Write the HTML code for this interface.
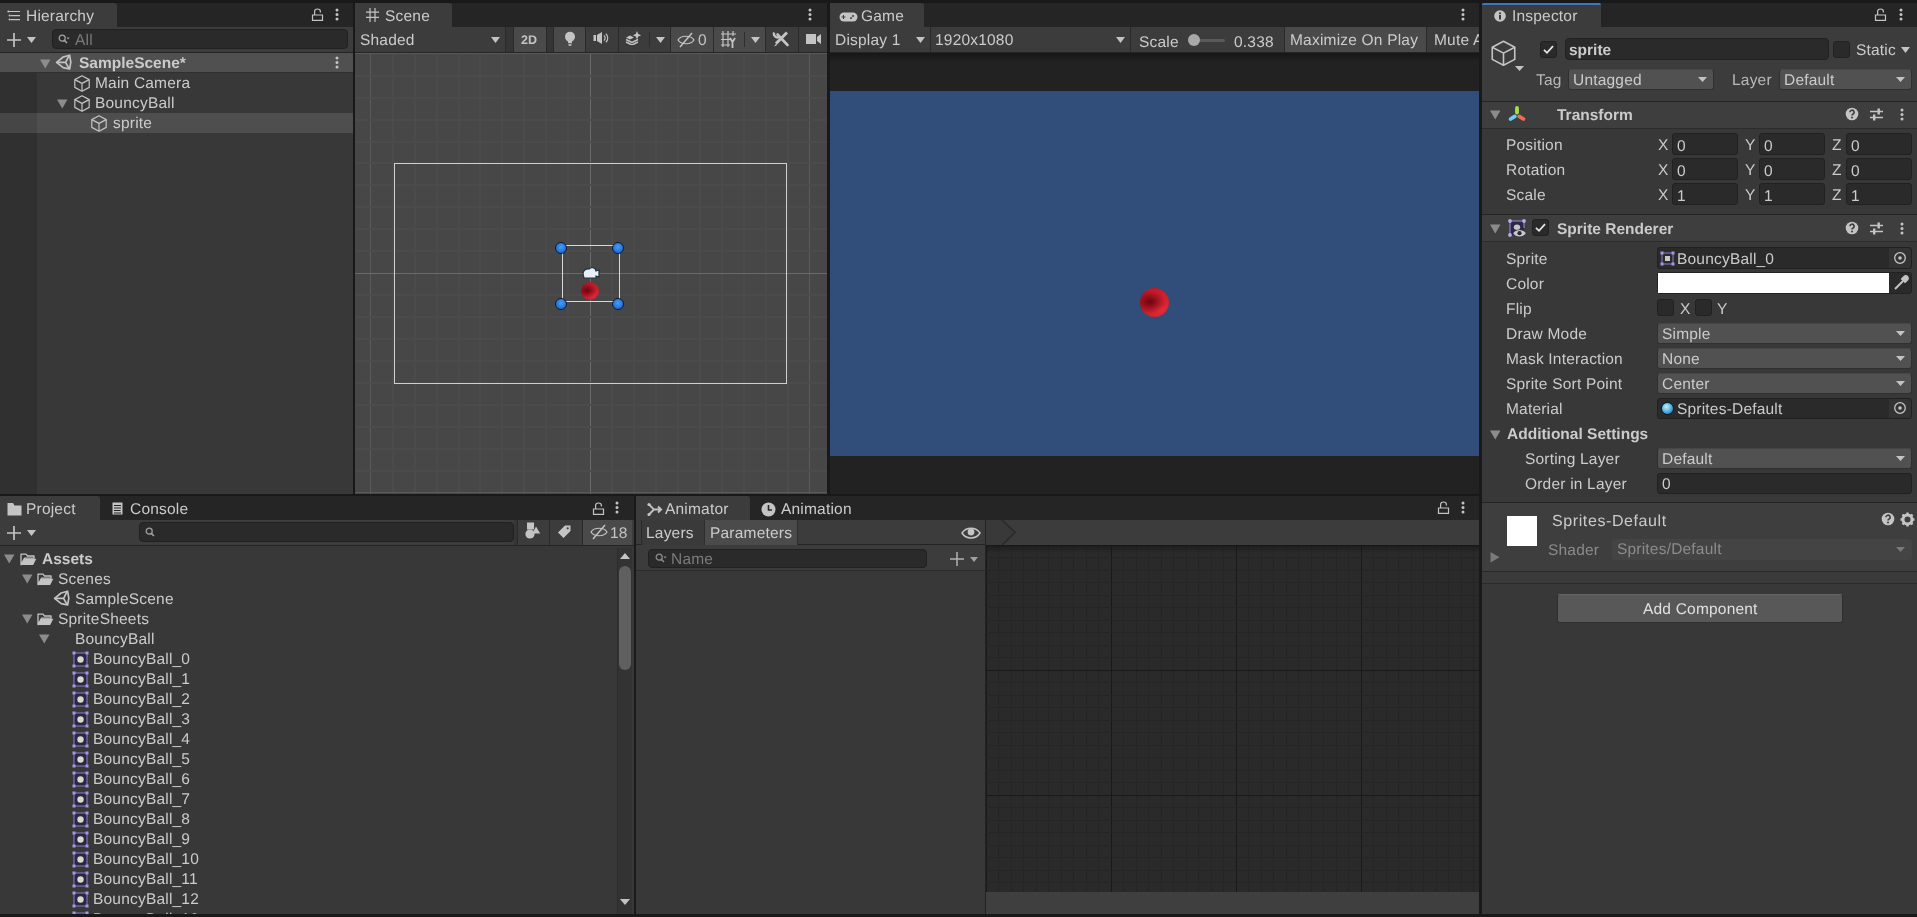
<!DOCTYPE html>
<html><head><meta charset="utf-8">
<style>
*{box-sizing:border-box;margin:0;padding:0}
html,body{width:1917px;height:917px;overflow:hidden;background:#191919}
.t{will-change:transform}
body{position:relative;font-family:"Liberation Sans",sans-serif;font-size:15.5px;color:#cbcbcb;letter-spacing:0.2px;text-rendering:geometricPrecision;-webkit-font-smoothing:antialiased}
.a{position:absolute;display:block}
.t{position:absolute;white-space:nowrap;line-height:20px;height:20px}
</style></head><body>

<div class="a" style="left:0px;top:3px;width:353px;height:491px;background:#383838;"></div>
<div class="a" style="left:0px;top:3px;width:353px;height:24px;background:#252525;"></div>
<div class="a" style="left:0px;top:3px;width:117px;height:24px;background:#3c3c3c;border-radius:0 3px 0 0"></div>
<svg class="a" style="left:7px;top:10px;" width="14" height="12" viewBox="0 0 14 12"><g stroke="#c4c4c4" stroke-width="1.1"><path d="M1.5 1.5H13M3.5 5.6H13M3.5 9.6H13"/></g><g fill="#c4c4c4"><circle cx="1.3" cy="1.5" r="1"/><circle cx="2.6" cy="5.6" r="1"/><circle cx="2.6" cy="9.6" r="1"/></g></svg>
<div class="t" style="left:26px;top:7px;">Hierarchy</div>
<svg class="a" style="left:311px;top:8px;" width="13" height="13" viewBox="0 0 13 13"><path d="M1.5 12.4h10v-5.4h-10z" fill="none" stroke="#c4c4c4" stroke-width="1.2"/><path d="M3.6 7V3.6a2.9 2.6 0 0 1 5.8 0V4.4" fill="none" stroke="#c4c4c4" stroke-width="1.2"/></svg>
<svg class="a" style="left:335px;top:8px;" width="4" height="13" viewBox="0 0 4 13"><circle cx="2" cy="2" r="1.5" fill="#c4c4c4"/><circle cx="2" cy="6.5" r="1.5" fill="#c4c4c4"/><circle cx="2" cy="11" r="1.5" fill="#c4c4c4"/></svg>
<div class="a" style="left:0px;top:27px;width:353px;height:26px;background:#3c3c3c;border-bottom:1px solid #242424"></div>
<svg class="a" style="left:6px;top:32px;" width="16" height="16" viewBox="0 0 16 16"><path d="M8 1V15M1 8H15" stroke="#c4c4c4" stroke-width="1.7"/></svg>
<svg class="a" style="left:27px;top:37px;" width="9" height="6" viewBox="0 0 9 6"><path d="M0 0H9L4.5 6z" fill="#c4c4c4"/></svg>
<div class="a" style="left:52px;top:29px;width:296px;height:20px;background:#2a2a2a;border:1px solid #212121;border-radius:4px"></div>
<svg class="a" style="left:58px;top:34px;" width="12" height="11" viewBox="0 0 12 11"><circle cx="4.2" cy="4.2" r="3" fill="none" stroke="#a0a0a0" stroke-width="1.3"/><path d="M6.4 6.4L9 9" stroke="#a0a0a0" stroke-width="1.6"/><path d="M8.5 3.6h3.2l-1.6 1.8z" fill="#a0a0a0"/></svg>
<div class="t" style="left:75px;top:31px;color:#7a7a7a;">All</div>
<div class="a" style="left:0px;top:53px;width:37px;height:441px;background:#303030;"></div>
<div class="a" style="left:0px;top:53px;width:353px;height:19px;background:#505050;"></div>
<div class="a" style="left:0px;top:72px;width:353px;height:1px;background:#303030;"></div>
<div class="a" style="left:0px;top:113px;width:37px;height:20px;background:#464646;"></div>
<div class="a" style="left:37px;top:113px;width:316px;height:20px;background:#4e4e4e;"></div>
<svg class="a" style="left:40px;top:59px;" width="11" height="10" viewBox="0 0 11 10"><path d="M0 0.5H10.5L5.25 9.5z" fill="#8c8c8c"/></svg>
<svg class="a" style="left:54px;top:53px;" width="19" height="18" viewBox="0 0 19 18"><g fill="none" stroke="#c4c4c4" stroke-width="1.7" stroke-linejoin="round"><path d="M2.6 9.3L9.2 4L15.6 2.2L16.8 9.2L15.6 16L9.2 14.6Z"/><path d="M2.6 9.3H11.6L14.8 3.2M11.6 9.3L14.8 15.2"/></g></svg>
<div class="t" style="left:79px;top:54px;font-weight:bold;letter-spacing:0;">SampleScene*</div>
<svg class="a" style="left:335px;top:56px;" width="4" height="13" viewBox="0 0 4 13"><circle cx="2" cy="2" r="1.5" fill="#c4c4c4"/><circle cx="2" cy="6.5" r="1.5" fill="#c4c4c4"/><circle cx="2" cy="11" r="1.5" fill="#c4c4c4"/></svg>
<svg class="a" style="left:74px;top:75px;" width="16" height="17" viewBox="0 0 16 17"><g fill="none" stroke="#c4c4c4" stroke-width="1.2" stroke-linejoin="round"><path d="M8.00 0.80L15.20 4.60L15.20 12.40L8.00 16.20L0.80 12.40L0.80 4.60Z"/><path d="M0.80 4.60L8.00 8.40L15.20 4.60M8.00 8.40L8.00 16.20"/></g></svg>
<div class="t" style="left:95px;top:74px;">Main Camera</div>
<svg class="a" style="left:57px;top:99px;" width="11" height="10" viewBox="0 0 11 10"><path d="M0 0.5H10.5L5.25 9.5z" fill="#8c8c8c"/></svg>
<svg class="a" style="left:74px;top:95px;" width="16" height="17" viewBox="0 0 16 17"><g fill="none" stroke="#c4c4c4" stroke-width="1.2" stroke-linejoin="round"><path d="M8.00 0.80L15.20 4.60L15.20 12.40L8.00 16.20L0.80 12.40L0.80 4.60Z"/><path d="M0.80 4.60L8.00 8.40L15.20 4.60M8.00 8.40L8.00 16.20"/></g></svg>
<div class="t" style="left:95px;top:94px;">BouncyBall</div>
<svg class="a" style="left:91px;top:115px;" width="16" height="17" viewBox="0 0 16 17"><g fill="none" stroke="#c4c4c4" stroke-width="1.2" stroke-linejoin="round"><path d="M8.00 0.80L15.20 4.60L15.20 12.40L8.00 16.20L0.80 12.40L0.80 4.60Z"/><path d="M0.80 4.60L8.00 8.40L15.20 4.60M8.00 8.40L8.00 16.20"/></g></svg>
<div class="t" style="left:113px;top:114px;">sprite</div>
<div class="a" style="left:353px;top:3px;width:2px;height:491px;background:#191919;"></div>
<div class="a" style="left:355px;top:52px;width:472px;height:442px;background:#474747;"></div>
<div class="a" style="left:355px;top:52px;width:472px;height:442px;overflow:hidden"><div class="a" style="left:15.20px;top:0;width:1px;height:442px;background:#5a5a5a"></div><div class="a" style="left:36.65px;top:0;width:2px;height:442px;background:#4b4b4b"></div><div class="a" style="left:58.60px;top:0;width:2px;height:442px;background:#4b4b4b"></div><div class="a" style="left:80.55px;top:0;width:2px;height:442px;background:#4b4b4b"></div><div class="a" style="left:102.50px;top:0;width:2px;height:442px;background:#4b4b4b"></div><div class="a" style="left:124.45px;top:0;width:2px;height:442px;background:#4b4b4b"></div><div class="a" style="left:146.40px;top:0;width:2px;height:442px;background:#4b4b4b"></div><div class="a" style="left:168.35px;top:0;width:2px;height:442px;background:#4b4b4b"></div><div class="a" style="left:190.30px;top:0;width:2px;height:442px;background:#4b4b4b"></div><div class="a" style="left:212.25px;top:0;width:2px;height:442px;background:#4b4b4b"></div><div class="a" style="left:234.70px;top:0;width:1px;height:442px;background:#6a6a6a"></div><div class="a" style="left:256.15px;top:0;width:2px;height:442px;background:#4b4b4b"></div><div class="a" style="left:278.10px;top:0;width:2px;height:442px;background:#4b4b4b"></div><div class="a" style="left:300.05px;top:0;width:2px;height:442px;background:#4b4b4b"></div><div class="a" style="left:322.00px;top:0;width:2px;height:442px;background:#4b4b4b"></div><div class="a" style="left:343.95px;top:0;width:2px;height:442px;background:#4b4b4b"></div><div class="a" style="left:365.90px;top:0;width:2px;height:442px;background:#4b4b4b"></div><div class="a" style="left:387.85px;top:0;width:2px;height:442px;background:#4b4b4b"></div><div class="a" style="left:409.80px;top:0;width:2px;height:442px;background:#4b4b4b"></div><div class="a" style="left:431.75px;top:0;width:2px;height:442px;background:#4b4b4b"></div><div class="a" style="left:454.20px;top:0;width:1px;height:442px;background:#5a5a5a"></div><div class="a" style="left:0;top:1.20px;width:472px;height:1px;background:#5a5a5a"></div><div class="a" style="left:0;top:22.65px;width:472px;height:2px;background:#4b4b4b"></div><div class="a" style="left:0;top:44.60px;width:472px;height:2px;background:#4b4b4b"></div><div class="a" style="left:0;top:66.55px;width:472px;height:2px;background:#4b4b4b"></div><div class="a" style="left:0;top:88.50px;width:472px;height:2px;background:#4b4b4b"></div><div class="a" style="left:0;top:110.45px;width:472px;height:2px;background:#4b4b4b"></div><div class="a" style="left:0;top:132.40px;width:472px;height:2px;background:#4b4b4b"></div><div class="a" style="left:0;top:154.35px;width:472px;height:2px;background:#4b4b4b"></div><div class="a" style="left:0;top:176.30px;width:472px;height:2px;background:#4b4b4b"></div><div class="a" style="left:0;top:198.25px;width:472px;height:2px;background:#4b4b4b"></div><div class="a" style="left:0;top:220.70px;width:472px;height:1px;background:#6a6a6a"></div><div class="a" style="left:0;top:242.15px;width:472px;height:2px;background:#4b4b4b"></div><div class="a" style="left:0;top:264.10px;width:472px;height:2px;background:#4b4b4b"></div><div class="a" style="left:0;top:286.05px;width:472px;height:2px;background:#4b4b4b"></div><div class="a" style="left:0;top:308.00px;width:472px;height:2px;background:#4b4b4b"></div><div class="a" style="left:0;top:329.95px;width:472px;height:2px;background:#4b4b4b"></div><div class="a" style="left:0;top:351.90px;width:472px;height:2px;background:#4b4b4b"></div><div class="a" style="left:0;top:373.85px;width:472px;height:2px;background:#4b4b4b"></div><div class="a" style="left:0;top:395.80px;width:472px;height:2px;background:#4b4b4b"></div><div class="a" style="left:0;top:417.75px;width:472px;height:2px;background:#4b4b4b"></div><div class="a" style="left:0;top:440.20px;width:472px;height:1px;background:#5a5a5a"></div></div>
<div class="a" style="left:394px;top:163px;width:393px;height:221px;background:transparent;border:1px solid #cfcfcf"></div>
<div class="a" style="left:562px;top:245px;width:58px;height:57px;background:transparent;border:1px solid #d8d8d8"></div>
<div class="a" style="left:581px;top:282px;width:18px;height:18px;border-radius:50%;background:radial-gradient(ellipse 55% 40% at 35% 48%,rgba(95,0,12,.9) 0,rgba(95,0,12,0) 100%),radial-gradient(circle at 70% 72%,#e02838 0,#c01c2a 55%,#a0141e 100%)"></div>
<svg class="a" style="left:580px;top:266px;" width="20" height="16" viewBox="0 0 20 16"><path d="M3 8a5 5 0 0 1 6-5a4 4 0 0 1 7 2l3-1v7l-3-1v2H4z" fill="#e8eef6" stroke="#22303f" stroke-width="1.2"/></svg>
<div class="a" style="left:555px;top:242px;width:12px;height:12px;border-radius:50%;background:radial-gradient(circle at 50% 40%,#4a9af5 0,#1f6fd6 70%);border:1.5px solid #0d1b33"></div>
<div class="a" style="left:612px;top:242px;width:12px;height:12px;border-radius:50%;background:radial-gradient(circle at 50% 40%,#4a9af5 0,#1f6fd6 70%);border:1.5px solid #0d1b33"></div>
<div class="a" style="left:555px;top:298px;width:12px;height:12px;border-radius:50%;background:radial-gradient(circle at 50% 40%,#4a9af5 0,#1f6fd6 70%);border:1.5px solid #0d1b33"></div>
<div class="a" style="left:612px;top:298px;width:12px;height:12px;border-radius:50%;background:radial-gradient(circle at 50% 40%,#4a9af5 0,#1f6fd6 70%);border:1.5px solid #0d1b33"></div>
<div class="a" style="left:355px;top:3px;width:472px;height:24px;background:#252525;"></div>
<div class="a" style="left:355px;top:3px;width:97px;height:24px;background:#3c3c3c;border-radius:0 3px 0 0"></div>
<svg class="a" style="left:366px;top:8px;" width="13" height="14" viewBox="0 0 13 14"><g stroke="#c4c4c4" stroke-width="1.2"><path d="M4 0V14M9 0V14M0 4.2H13M0 9.4H13"/></g></svg>
<div class="t" style="left:385px;top:7px;">Scene</div>
<svg class="a" style="left:808px;top:8px;" width="4" height="13" viewBox="0 0 4 13"><circle cx="2" cy="2" r="1.5" fill="#c4c4c4"/><circle cx="2" cy="6.5" r="1.5" fill="#c4c4c4"/><circle cx="2" cy="11" r="1.5" fill="#c4c4c4"/></svg>
<div class="a" style="left:355px;top:27px;width:472px;height:26px;background:#3c3c3c;border-bottom:1px solid #242424"></div>
<div class="t" style="left:360px;top:31px;">Shaded</div>
<svg class="a" style="left:491px;top:37px;" width="9" height="6" viewBox="0 0 9 6"><path d="M0 0H9L4.5 6z" fill="#c4c4c4"/></svg>
<div class="a" style="left:505px;top:27px;width:9px;height:25px;background:#353535;border-left:1px solid #2a2a2a;border-right:1px solid #2a2a2a"></div>
<div class="a" style="left:514px;top:27px;width:32px;height:25px;background:#4a4a4a;"></div>
<div class="t" style="left:521px;top:30px;color:#c4c4c4;font-weight:bold;letter-spacing:0;font-size:12.5px;">2D</div>
<div class="a" style="left:546px;top:27px;width:8px;height:25px;background:#353535;border-left:1px solid #2a2a2a;border-right:1px solid #2a2a2a"></div>
<div class="a" style="left:554px;top:27px;width:31px;height:25px;background:#4a4a4a;"></div>
<svg class="a" style="left:563px;top:31px;" width="14" height="17" viewBox="0 0 14 17"><circle cx="7" cy="5.8" r="5" fill="#c4c4c4"/><path d="M4.6 9h4.8l-.6 3.2H5.2z" fill="#c4c4c4"/><path d="M5.2 13.2h3.6a1.8 1.8 0 0 1-3.6 0z" fill="#c4c4c4"/></svg>
<div class="a" style="left:585px;top:27px;width:1px;height:25px;background:#2a2a2a;"></div>
<svg class="a" style="left:593px;top:32px;" width="17" height="12" viewBox="0 0 17 12"><rect x="0.5" y="3" width="2.5" height="6" fill="#c4c4c4"/><path d="M4 3L9 0V12L4 9z" fill="#c4c4c4"/><path d="M10.8 3.5a3 3 0 0 1 0 5M12.8 1.8a5.5 5.5 0 0 1 0 8.4" fill="none" stroke="#c4c4c4" stroke-width="1.2"/></svg>
<div class="a" style="left:618px;top:27px;width:1px;height:25px;background:#2a2a2a;"></div>
<svg class="a" style="left:625px;top:31px;" width="17" height="14" viewBox="0 0 17 14"><path d="M1 8.5l6 3l6-3M1 11l6 3l6-3" fill="none" stroke="#c4c4c4" stroke-width="1.5"/><path d="M1 6.5l4-2l4 2l-4 2z" fill="#c4c4c4"/><path d="M12 0l1.2 3l3 1.2l-3 1.2L12 8.5l-1.2-3l-3-1.2l3-1.2z" fill="#c4c4c4"/></svg>
<div class="a" style="left:649px;top:32px;width:1px;height:15px;background:#2e2e2e;"></div>
<svg class="a" style="left:656px;top:37px;" width="9" height="6" viewBox="0 0 9 6"><path d="M0 0H9L4.5 6z" fill="#c4c4c4"/></svg>
<div class="a" style="left:670px;top:27px;width:1px;height:25px;background:#2a2a2a;"></div>
<div class="a" style="left:671px;top:27px;width:42px;height:25px;background:#4a4a4a;"></div>
<svg class="a" style="left:677px;top:31px;" width="19" height="17" viewBox="0 0 19 17"><path d="M1 9c3-5 13-5 16 0c-3 5-13 5-16 0z" fill="none" stroke="#c4c4c4" stroke-width="1.2"/><path d="M3 16L15 2" stroke="#c4c4c4" stroke-width="1.4"/></svg>
<div class="t" style="left:698px;top:31px;color:#c4c4c4;">0</div>
<div class="a" style="left:713px;top:27px;width:1px;height:25px;background:#2a2a2a;"></div>
<div class="a" style="left:714px;top:27px;width:51px;height:25px;background:#4a4a4a;"></div>
<svg class="a" style="left:720px;top:30px;" width="18" height="19" viewBox="0 0 18 19"><g stroke="#c4c4c4" stroke-width="1.2"><path d="M3 1V17M8 1V17M13 1V6M1 4H16M1 9.5H10M1 15H10"/></g><path d="M10 8l2.5 4v6M15 8l-2.5 4" fill="none" stroke="#c4c4c4" stroke-width="1.8"/></svg>
<div class="a" style="left:744px;top:32px;width:1px;height:15px;background:#2e2e2e;"></div>
<svg class="a" style="left:751px;top:37px;" width="9" height="6" viewBox="0 0 9 6"><path d="M0 0H9L4.5 6z" fill="#c4c4c4"/></svg>
<div class="a" style="left:765px;top:27px;width:1px;height:25px;background:#2a2a2a;"></div>
<svg class="a" style="left:772px;top:30px;" width="18" height="18" viewBox="0 0 18 18"><path d="M5.5 4.5L15.5 15" stroke="#c4c4c4" stroke-width="2.6" stroke-linecap="round"/><path d="M2.2 2.5a3.6 3.6 0 0 0 4.8 4.6" fill="none" stroke="#c4c4c4" stroke-width="2.4"/><path d="M15 2.5L4 13.5" stroke="#c4c4c4" stroke-width="3"/><path d="M4 13.5L2 16.5L5.2 15z" fill="#c4c4c4"/></svg>
<div class="a" style="left:798px;top:27px;width:1px;height:25px;background:#2a2a2a;"></div>
<svg class="a" style="left:806px;top:33px;" width="16" height="12" viewBox="0 0 16 12"><rect x="0" y="1" width="10" height="10" fill="#c4c4c4"/><path d="M11 4L15 1V11L11 8z" fill="#c4c4c4"/></svg>
<div class="a" style="left:827px;top:3px;width:3px;height:491px;background:#191919;"></div>
<div class="a" style="left:830px;top:52px;width:649px;height:442px;background:#222222;"></div>
<div class="a" style="left:830px;top:52px;width:649px;height:10px;background:linear-gradient(#151515,#222222)"></div>
<div class="a" style="left:830px;top:91px;width:649px;height:365px;background:#314d79;"></div>
<div class="a" style="left:1140px;top:288px;width:29px;height:29px;border-radius:50%;background:radial-gradient(ellipse 55% 40% at 35% 48%,rgba(95,0,12,.9) 0,rgba(95,0,12,0) 100%),radial-gradient(circle at 70% 72%,#e82a3a 0,#cc1e2c 55%,#b0151f 100%)"></div>
<div class="a" style="left:830px;top:3px;width:649px;height:24px;background:#252525;"></div>
<div class="a" style="left:830px;top:3px;width:94px;height:24px;background:#3c3c3c;border-radius:0 3px 0 0"></div>
<svg class="a" style="left:839px;top:12px;" width="19" height="10" viewBox="0 0 19 10"><rect x="0.5" y="0.5" width="18" height="9" rx="4.5" fill="#c4c4c4"/><path d="M4.5 3V7M2.5 5H6.5" stroke="#3c3c3c" stroke-width="1"/><circle cx="12" cy="6" r="1" fill="#3c3c3c"/><circle cx="14" cy="4" r="1" fill="#3c3c3c"/></svg>
<div class="t" style="left:861px;top:7px;">Game</div>
<svg class="a" style="left:1461px;top:8px;" width="4" height="13" viewBox="0 0 4 13"><circle cx="2" cy="2" r="1.5" fill="#c4c4c4"/><circle cx="2" cy="6.5" r="1.5" fill="#c4c4c4"/><circle cx="2" cy="11" r="1.5" fill="#c4c4c4"/></svg>
<div class="a" style="left:830px;top:27px;width:649px;height:26px;background:#3c3c3c;border-bottom:1px solid #242424"></div>
<div class="t" style="left:835px;top:31px;">Display 1</div>
<svg class="a" style="left:916px;top:37px;" width="9" height="6" viewBox="0 0 9 6"><path d="M0 0H9L4.5 6z" fill="#c4c4c4"/></svg>
<div class="a" style="left:930px;top:27px;width:1px;height:25px;background:#2a2a2a;"></div>
<div class="t" style="left:935px;top:31px;">1920x1080</div>
<svg class="a" style="left:1116px;top:37px;" width="9" height="6" viewBox="0 0 9 6"><path d="M0 0H9L4.5 6z" fill="#c4c4c4"/></svg>
<div class="a" style="left:1130px;top:27px;width:1px;height:25px;background:#2a2a2a;"></div>
<div class="t" style="left:1139px;top:33px;">Scale</div>
<div class="a" style="left:1198px;top:39px;width:27px;height:3px;background:#5a5a5a;border-radius:2px"></div>
<div class="a" style="left:1188px;top:34px;width:12px;height:12px;border-radius:50%;background:#a8a8a8"></div>
<div class="t" style="left:1234px;top:33px;">0.338</div>
<div class="a" style="left:1284px;top:27px;width:1px;height:25px;background:#2a2a2a;"></div>
<div class="a" style="left:1285px;top:27px;width:141px;height:25px;background:#4a4a4a;"></div>
<div class="t" style="left:1290px;top:31px;">Maximize On Play</div>
<div class="a" style="left:1426px;top:27px;width:1px;height:25px;background:#2a2a2a;"></div>
<div class="a" style="left:1427px;top:27px;width:52px;height:25px;overflow:hidden"><div class="t" style="left:7px;top:4px">Mute Audio</div></div>
<div class="a" style="left:1479px;top:3px;width:3px;height:911px;background:#191919;"></div>
<div class="a" style="left:1482px;top:3px;width:435px;height:911px;background:#383838;"></div>
<div class="a" style="left:1482px;top:3px;width:435px;height:24px;background:#252525;"></div>
<div class="a" style="left:1482px;top:3px;width:119px;height:24px;background:#3c3c3c;border-radius:0 3px 0 0"></div>
<div class="a" style="left:1482px;top:3px;width:119px;height:2px;background:#3a79bb;border-radius:2px 2px 0 0"></div>
<svg class="a" style="left:1494px;top:10px;" width="12" height="12" viewBox="0 0 12 12"><circle cx="6" cy="6" r="5.8" fill="#c4c4c4"/><rect x="5" y="5" width="2" height="4.5" fill="#3c3c3c"/><circle cx="6" cy="3.3" r="1.1" fill="#3c3c3c"/></svg>
<div class="t" style="left:1512px;top:7px;">Inspector</div>
<svg class="a" style="left:1874px;top:8px;" width="13" height="13" viewBox="0 0 13 13"><path d="M1.5 12.4h10v-5.4h-10z" fill="none" stroke="#c4c4c4" stroke-width="1.2"/><path d="M3.6 7V3.6a2.9 2.6 0 0 1 5.8 0V4.4" fill="none" stroke="#c4c4c4" stroke-width="1.2"/></svg>
<svg class="a" style="left:1899px;top:8px;" width="4" height="13" viewBox="0 0 4 13"><circle cx="2" cy="2" r="1.5" fill="#c4c4c4"/><circle cx="2" cy="6.5" r="1.5" fill="#c4c4c4"/><circle cx="2" cy="11" r="1.5" fill="#c4c4c4"/></svg>
<div class="a" style="left:1482px;top:27px;width:435px;height:74px;background:#3c3c3c;"></div>
<svg class="a" style="left:1491px;top:40px;" width="25" height="27" viewBox="0 0 25 27"><g fill="none" stroke="#c4c4c4" stroke-width="1.6" stroke-linejoin="round"><path d="M12.50 1.25L23.75 7.19L23.75 19.38L12.50 25.31L1.25 19.38L1.25 7.19Z"/><path d="M1.25 7.19L12.50 13.12L23.75 7.19M12.50 13.12L12.50 25.31"/></g></svg>
<svg class="a" style="left:1515px;top:66px;" width="9" height="5" viewBox="0 0 9 5"><path d="M0 0H9L4.5 5z" fill="#c4c4c4"/></svg>
<div class="a" style="left:1540px;top:41px;width:17px;height:17px;background:#2a2a2a;border:1px solid #212121;border-radius:3px"></div>
<svg class="a" style="left:1540px;top:41px;" width="17" height="17" viewBox="0 0 17 17"><path d="M4 8.8L7 11.8L13 5.2" fill="none" stroke="#e4e4e4" stroke-width="1.8"/></svg>
<div class="a" style="left:1565px;top:38px;width:264px;height:22px;background:#2a2a2a;border:1px solid #212121;border-radius:4px"></div>
<div class="t" style="left:1569px;top:41px;font-weight:bold;letter-spacing:0;">sprite</div>
<div class="a" style="left:1833px;top:41px;width:17px;height:17px;background:#2a2a2a;border:1px solid #212121;border-radius:3px"></div>
<div class="t" style="left:1856px;top:41px;">Static</div>
<svg class="a" style="left:1901px;top:47px;" width="9" height="6" viewBox="0 0 9 6"><path d="M0 0H9L4.5 6z" fill="#c4c4c4"/></svg>
<div class="t" style="left:1536px;top:71px;color:#b8b8b8;">Tag</div>
<div class="a" style="left:1568px;top:69px;width:146px;height:21px;background:#515151;border:1px solid #303030;border-top-color:#464646;border-radius:3px"></div>
<div class="t" style="left:1573px;top:71px;">Untagged</div>
<svg class="a" style="left:1698px;top:77px;" width="9" height="5" viewBox="0 0 9 5"><path d="M0 0H9L4.5 5z" fill="#c4c4c4"/></svg>
<div class="t" style="left:1732px;top:71px;color:#b8b8b8;">Layer</div>
<div class="a" style="left:1779px;top:69px;width:133px;height:21px;background:#515151;border:1px solid #303030;border-top-color:#464646;border-radius:3px"></div>
<div class="t" style="left:1784px;top:71px;">Default</div>
<svg class="a" style="left:1896px;top:77px;" width="9" height="5" viewBox="0 0 9 5"><path d="M0 0H9L4.5 5z" fill="#c4c4c4"/></svg>
<div class="a" style="left:1482px;top:101px;width:435px;height:1px;background:#242424;"></div>
<div class="a" style="left:1482px;top:102px;width:435px;height:27px;background:#3e3e3e;border-bottom:1px solid #2c2c2c"></div>
<svg class="a" style="left:1490px;top:110px;" width="11" height="10" viewBox="0 0 11 10"><path d="M0 0.5H10.5L5.25 9.5z" fill="#8c8c8c"/></svg>
<svg class="a" style="left:1506px;top:104px;" width="21" height="19" viewBox="0 0 21 19"><path d="M11 4V8.5" stroke="#a8e040" stroke-width="3.8" stroke-linecap="round"/><path d="M8.8 12.4L4.6 15" stroke="#68d0f0" stroke-width="3.8" stroke-linecap="round"/><path d="M13.2 12.4L17.4 15" stroke="#f06a55" stroke-width="3.8" stroke-linecap="round"/></svg>
<div class="t" style="left:1557px;top:106px;font-weight:bold;letter-spacing:0;">Transform</div>
<svg class="a" style="left:1845px;top:107px;" width="14" height="14" viewBox="0 0 14 14"><circle cx="7" cy="7" r="6.3" fill="#c4c4c4"/><path d="M4.9 5.3a2.1 2.1 0 1 1 2.9 1.9c-.6.3-.8.6-.8 1.3" fill="none" stroke="#3c3c3c" stroke-width="1.6"/><circle cx="7" cy="10.6" r="1" fill="#3c3c3c"/></svg>
<svg class="a" style="left:1870px;top:108px;" width="13" height="13" viewBox="0 0 13 13"><g stroke="#c4c4c4" stroke-width="1.4"><path d="M0 3.5H13M0 9.5H13"/></g><rect x="7.5" y="0.5" width="2.4" height="6" fill="#c4c4c4"/><rect x="3" y="6.5" width="2.4" height="6" fill="#c4c4c4"/></svg>
<svg class="a" style="left:1900px;top:108px;" width="4" height="13" viewBox="0 0 4 13"><circle cx="2" cy="2" r="1.5" fill="#c4c4c4"/><circle cx="2" cy="6.5" r="1.5" fill="#c4c4c4"/><circle cx="2" cy="11" r="1.5" fill="#c4c4c4"/></svg>
<div class="a" style="left:1482px;top:129px;width:435px;height:85px;background:#383838;"></div>
<div class="t" style="left:1506px;top:136px;">Position</div>
<div class="t" style="left:1658px;top:136px;">X</div>
<div class="a" style="left:1672px;top:133px;width:66px;height:22px;background:#2a2a2a;border:1px solid #212121;border-radius:3px"></div>
<div class="t" style="left:1677px;top:137px;">0</div>
<div class="t" style="left:1745px;top:136px;">Y</div>
<div class="a" style="left:1759px;top:133px;width:66px;height:22px;background:#2a2a2a;border:1px solid #212121;border-radius:3px"></div>
<div class="t" style="left:1764px;top:137px;">0</div>
<div class="t" style="left:1832px;top:136px;">Z</div>
<div class="a" style="left:1846px;top:133px;width:66px;height:22px;background:#2a2a2a;border:1px solid #212121;border-radius:3px"></div>
<div class="t" style="left:1851px;top:137px;">0</div>
<div class="t" style="left:1506px;top:161px;">Rotation</div>
<div class="t" style="left:1658px;top:161px;">X</div>
<div class="a" style="left:1672px;top:158px;width:66px;height:22px;background:#2a2a2a;border:1px solid #212121;border-radius:3px"></div>
<div class="t" style="left:1677px;top:162px;">0</div>
<div class="t" style="left:1745px;top:161px;">Y</div>
<div class="a" style="left:1759px;top:158px;width:66px;height:22px;background:#2a2a2a;border:1px solid #212121;border-radius:3px"></div>
<div class="t" style="left:1764px;top:162px;">0</div>
<div class="t" style="left:1832px;top:161px;">Z</div>
<div class="a" style="left:1846px;top:158px;width:66px;height:22px;background:#2a2a2a;border:1px solid #212121;border-radius:3px"></div>
<div class="t" style="left:1851px;top:162px;">0</div>
<div class="t" style="left:1506px;top:186px;">Scale</div>
<div class="t" style="left:1658px;top:186px;">X</div>
<div class="a" style="left:1672px;top:183px;width:66px;height:22px;background:#2a2a2a;border:1px solid #212121;border-radius:3px"></div>
<div class="t" style="left:1677px;top:187px;">1</div>
<div class="t" style="left:1745px;top:186px;">Y</div>
<div class="a" style="left:1759px;top:183px;width:66px;height:22px;background:#2a2a2a;border:1px solid #212121;border-radius:3px"></div>
<div class="t" style="left:1764px;top:187px;">1</div>
<div class="t" style="left:1832px;top:186px;">Z</div>
<div class="a" style="left:1846px;top:183px;width:66px;height:22px;background:#2a2a2a;border:1px solid #212121;border-radius:3px"></div>
<div class="t" style="left:1851px;top:187px;">1</div>
<div class="a" style="left:1482px;top:214px;width:435px;height:1px;background:#242424;"></div>
<div class="a" style="left:1482px;top:215px;width:435px;height:27px;background:#3e3e3e;border-bottom:1px solid #2c2c2c"></div>
<svg class="a" style="left:1490px;top:224px;" width="11" height="10" viewBox="0 0 11 10"><path d="M0 0.5H10.5L5.25 9.5z" fill="#8c8c8c"/></svg>
<svg class="a" style="left:1508px;top:219px;" width="19" height="19" viewBox="0 0 19 19"><rect x="2" y="2" width="14" height="14" fill="#2b2745"/><path d="M2 16V2H16V9" fill="none" stroke="#9a90d8" stroke-width="1"/><g fill="#b4ace8"><circle cx="2" cy="2" r="1.9"/><circle cx="16" cy="2" r="1.9"/><circle cx="2" cy="16" r="1.9"/></g><ellipse cx="9" cy="8.2" rx="3.2" ry="2.6" fill="#c4c4c4"/><path d="M5.2 14.2c3-4.4 9.6-4.4 12.6 0c-3 4.4-9.6 4.4-12.6 0z" fill="#c8c8c8"/><circle cx="11.5" cy="14.2" r="2.1" fill="#2a2a35"/></svg>
<div class="a" style="left:1532px;top:219px;width:17px;height:17px;background:#2a2a2a;border:1px solid #212121;border-radius:3px"></div>
<svg class="a" style="left:1532px;top:219px;" width="17" height="17" viewBox="0 0 17 17"><path d="M4 8.8L7 11.8L13 5.2" fill="none" stroke="#e4e4e4" stroke-width="1.8"/></svg>
<div class="t" style="left:1557px;top:220px;font-weight:bold;letter-spacing:0;">Sprite Renderer</div>
<svg class="a" style="left:1845px;top:221px;" width="14" height="14" viewBox="0 0 14 14"><circle cx="7" cy="7" r="6.3" fill="#c4c4c4"/><path d="M4.9 5.3a2.1 2.1 0 1 1 2.9 1.9c-.6.3-.8.6-.8 1.3" fill="none" stroke="#3c3c3c" stroke-width="1.6"/><circle cx="7" cy="10.6" r="1" fill="#3c3c3c"/></svg>
<svg class="a" style="left:1870px;top:222px;" width="13" height="13" viewBox="0 0 13 13"><g stroke="#c4c4c4" stroke-width="1.4"><path d="M0 3.5H13M0 9.5H13"/></g><rect x="7.5" y="0.5" width="2.4" height="6" fill="#c4c4c4"/><rect x="3" y="6.5" width="2.4" height="6" fill="#c4c4c4"/></svg>
<svg class="a" style="left:1900px;top:222px;" width="4" height="13" viewBox="0 0 4 13"><circle cx="2" cy="2" r="1.5" fill="#c4c4c4"/><circle cx="2" cy="6.5" r="1.5" fill="#c4c4c4"/><circle cx="2" cy="11" r="1.5" fill="#c4c4c4"/></svg>
<div class="a" style="left:1482px;top:242px;width:435px;height:260px;background:#383838;"></div>
<div class="t" style="left:1506px;top:250px;">Sprite</div>
<div class="a" style="left:1657px;top:247px;width:255px;height:22px;background:#2a2a2a;border:1px solid #212121;border-radius:3px"></div>
<div class="a" style="left:1889px;top:248px;width:22px;height:20px;background:#333333;border-radius:0 3px 3px 0"></div>
<svg class="a" style="left:1660px;top:251px;" width="15" height="15" viewBox="0 0 15 15"><rect x="2" y="2" width="11" height="11" fill="none" stroke="#8a7cd0" stroke-width="1"/><g fill="#a598e0"><rect x="0.5" y="0.5" width="3" height="3"/><rect x="11.5" y="0.5" width="3" height="3"/><rect x="0.5" y="11.5" width="3" height="3"/><rect x="11.5" y="11.5" width="3" height="3"/></g><rect x="5" y="5" width="5" height="5" fill="#c8c8c8"/></svg>
<div class="t" style="left:1677px;top:250px;">BouncyBall_0</div>
<svg class="a" style="left:1893px;top:251px;" width="14" height="14" viewBox="0 0 14 14"><circle cx="7" cy="7" r="5.3" fill="none" stroke="#c4c4c4" stroke-width="1.3"/><circle cx="7" cy="7" r="1.8" fill="#c4c4c4"/></svg>
<div class="t" style="left:1506px;top:275px;">Color</div>
<div class="a" style="left:1657px;top:272px;width:255px;height:22px;background:#2a2a2a;border:1px solid #222;border-radius:3px"></div>
<div class="a" style="left:1658px;top:273px;width:231px;height:20px;background:#ffffff;"></div>
<svg class="a" style="left:1893px;top:275px;" width="16" height="16" viewBox="0 0 16 16"><path d="M2 14l8-8" stroke="#c4c4c4" stroke-width="2"/><path d="M9 3l4 4M11 1.5a2 2 0 0 1 3.5 3.5L12 7.5L8.5 4z" fill="#c4c4c4" stroke="#c4c4c4" stroke-width="1.2"/></svg>
<div class="t" style="left:1506px;top:300px;">Flip</div>
<div class="a" style="left:1657px;top:299px;width:17px;height:17px;background:#2a2a2a;border:1px solid #212121;border-radius:3px"></div>
<div class="t" style="left:1680px;top:300px;">X</div>
<div class="a" style="left:1695px;top:299px;width:17px;height:17px;background:#2a2a2a;border:1px solid #212121;border-radius:3px"></div>
<div class="t" style="left:1717px;top:300px;">Y</div>
<div class="t" style="left:1506px;top:325px;">Draw Mode</div>
<div class="a" style="left:1657px;top:323px;width:255px;height:21px;background:#515151;border:1px solid #303030;border-top-color:#464646;border-radius:3px"></div>
<div class="t" style="left:1662px;top:325px;">Simple</div>
<svg class="a" style="left:1896px;top:331px;" width="9" height="5" viewBox="0 0 9 5"><path d="M0 0H9L4.5 5z" fill="#c4c4c4"/></svg>
<div class="t" style="left:1506px;top:350px;">Mask Interaction</div>
<div class="a" style="left:1657px;top:348px;width:255px;height:21px;background:#515151;border:1px solid #303030;border-top-color:#464646;border-radius:3px"></div>
<div class="t" style="left:1662px;top:350px;">None</div>
<svg class="a" style="left:1896px;top:356px;" width="9" height="5" viewBox="0 0 9 5"><path d="M0 0H9L4.5 5z" fill="#c4c4c4"/></svg>
<div class="t" style="left:1506px;top:375px;">Sprite Sort Point</div>
<div class="a" style="left:1657px;top:373px;width:255px;height:21px;background:#515151;border:1px solid #303030;border-top-color:#464646;border-radius:3px"></div>
<div class="t" style="left:1662px;top:375px;">Center</div>
<svg class="a" style="left:1896px;top:381px;" width="9" height="5" viewBox="0 0 9 5"><path d="M0 0H9L4.5 5z" fill="#c4c4c4"/></svg>
<div class="t" style="left:1506px;top:400px;">Material</div>
<div class="a" style="left:1657px;top:398px;width:255px;height:21px;background:#2a2a2a;border:1px solid #212121;border-radius:3px"></div>
<div class="a" style="left:1889px;top:399px;width:22px;height:19px;background:#333333;border-radius:0 3px 3px 0"></div>
<div class="a" style="left:1661px;top:402px;width:13px;height:13px;border-radius:50%;background:radial-gradient(circle at 40% 35%,#c8f0ff 0,#5ab8e8 45%,#1a5a88 100%);border:1px solid #101820"></div>
<div class="t" style="left:1677px;top:400px;">Sprites-Default</div>
<svg class="a" style="left:1893px;top:401px;" width="14" height="14" viewBox="0 0 14 14"><circle cx="7" cy="7" r="5.3" fill="none" stroke="#c4c4c4" stroke-width="1.3"/><circle cx="7" cy="7" r="1.8" fill="#c4c4c4"/></svg>
<svg class="a" style="left:1490px;top:430px;" width="11" height="10" viewBox="0 0 11 10"><path d="M0 0.5H10.5L5.25 9.5z" fill="#8c8c8c"/></svg>
<div class="t" style="left:1507px;top:425px;font-weight:bold;letter-spacing:0;">Additional Settings</div>
<div class="t" style="left:1525px;top:450px;">Sorting Layer</div>
<div class="a" style="left:1657px;top:448px;width:255px;height:21px;background:#515151;border:1px solid #303030;border-top-color:#464646;border-radius:3px"></div>
<div class="t" style="left:1662px;top:450px;">Default</div>
<svg class="a" style="left:1896px;top:456px;" width="9" height="5" viewBox="0 0 9 5"><path d="M0 0H9L4.5 5z" fill="#c4c4c4"/></svg>
<div class="t" style="left:1525px;top:475px;">Order in Layer</div>
<div class="a" style="left:1657px;top:473px;width:255px;height:21px;background:#2a2a2a;border:1px solid #212121;border-radius:3px"></div>
<div class="t" style="left:1662px;top:475px;">0</div>
<div class="a" style="left:1482px;top:502px;width:435px;height:1px;background:#242424;"></div>
<div class="a" style="left:1482px;top:503px;width:435px;height:68px;background:#3e3e3e;"></div>
<div class="a" style="left:1507px;top:516px;width:30px;height:30px;background:#ffffff;"></div>
<div class="t" style="left:1552px;top:512px;font-size:16px;letter-spacing:0.6px;">Sprites-Default</div>
<svg class="a" style="left:1881px;top:512px;" width="14" height="14" viewBox="0 0 14 14"><circle cx="7" cy="7" r="6.3" fill="#c4c4c4"/><path d="M4.9 5.3a2.1 2.1 0 1 1 2.9 1.9c-.6.3-.8.6-.8 1.3" fill="none" stroke="#3c3c3c" stroke-width="1.6"/><circle cx="7" cy="10.6" r="1" fill="#3c3c3c"/></svg>
<svg class="a" style="left:1900px;top:512px;" width="15" height="15" viewBox="0 0 15 15"><circle cx="7.5" cy="7.5" r="4.5" fill="none" stroke="#c4c4c4" stroke-width="3"/><g stroke="#c4c4c4" stroke-width="2.4"><path d="M7.5 0.5V3M7.5 12V14.5M0.5 7.5H3M12 7.5H14.5M2.5 2.5L4.3 4.3M10.7 10.7L12.5 12.5M2.5 12.5L4.3 10.7M10.7 4.3L12.5 2.5"/></g></svg>
<div class="t" style="left:1548px;top:541px;color:#8a8a8a;">Shader</div>
<div class="a" style="left:1612px;top:539px;width:300px;height:21px;background:#444444;border-radius:3px"></div>
<div class="t" style="left:1617px;top:540px;color:#8c8c8c;">Sprites/Default</div>
<svg class="a" style="left:1896px;top:547px;" width="9" height="5" viewBox="0 0 9 5"><path d="M0 0H9L4.5 5z" fill="#7a7a7a"/></svg>
<svg class="a" style="left:1490px;top:552px;" width="10" height="11" viewBox="0 0 10 11"><path d="M0.5 0V10.5L9.5 5.25z" fill="#7a7a7a"/></svg>
<div class="a" style="left:1482px;top:571px;width:435px;height:1px;background:#2a2a2a;"></div>
<div class="a" style="left:1482px;top:572px;width:435px;height:11px;background:#3a3a3a;"></div>
<div class="a" style="left:1482px;top:583px;width:435px;height:1px;background:#2a2a2a;"></div>
<div class="a" style="left:1557px;top:594px;width:286px;height:29px;background:#585858;border:1px solid #303030;border-top-color:#656565;border-radius:3px"></div>
<div class="t" style="left:1643px;top:600px;color:#e0e0e0;">Add Component</div>
<div class="a" style="left:0px;top:494px;width:1479px;height:2px;background:#191919;"></div>
<div class="a" style="left:0px;top:496px;width:634px;height:418px;background:#383838;"></div>
<div class="a" style="left:0px;top:496px;width:634px;height:24px;background:#252525;"></div>
<div class="a" style="left:0px;top:496px;width:100px;height:24px;background:#3c3c3c;border-radius:0 3px 0 0"></div>
<svg class="a" style="left:7px;top:502px;" width="15" height="14" viewBox="0 0 15 14"><path d="M0.5 1h5.5l1.5 2.5h7v10h-14z" fill="#c4c4c4"/></svg>
<div class="t" style="left:26px;top:500px;">Project</div>
<svg class="a" style="left:112px;top:502px;" width="11" height="13" viewBox="0 0 11 13"><rect x="0.5" y="0.5" width="10" height="12" fill="#c4c4c4"/><g stroke="#232323" stroke-width="1"><path d="M2 3.5H9M2 6H9M2 8.5H8.5M2 11H9"/></g></svg>
<div class="t" style="left:130px;top:500px;">Console</div>
<svg class="a" style="left:592px;top:502px;" width="13" height="13" viewBox="0 0 13 13"><path d="M1.5 12.4h10v-5.4h-10z" fill="none" stroke="#c4c4c4" stroke-width="1.2"/><path d="M3.6 7V3.6a2.9 2.6 0 0 1 5.8 0V4.4" fill="none" stroke="#c4c4c4" stroke-width="1.2"/></svg>
<svg class="a" style="left:615px;top:501px;" width="4" height="13" viewBox="0 0 4 13"><circle cx="2" cy="2" r="1.5" fill="#c4c4c4"/><circle cx="2" cy="6.5" r="1.5" fill="#c4c4c4"/><circle cx="2" cy="11" r="1.5" fill="#c4c4c4"/></svg>
<div class="a" style="left:0px;top:520px;width:634px;height:26px;background:#3c3c3c;border-bottom:1px solid #242424"></div>
<svg class="a" style="left:6px;top:525px;" width="16" height="16" viewBox="0 0 16 16"><path d="M8 1V15M1 8H15" stroke="#c4c4c4" stroke-width="1.7"/></svg>
<svg class="a" style="left:27px;top:530px;" width="9" height="6" viewBox="0 0 9 6"><path d="M0 0H9L4.5 6z" fill="#c4c4c4"/></svg>
<div class="a" style="left:139px;top:522px;width:375px;height:20px;background:#2a2a2a;border:1px solid #212121;border-radius:4px"></div>
<svg class="a" style="left:145px;top:527px;" width="12" height="11" viewBox="0 0 12 11"><circle cx="4.2" cy="4.2" r="3" fill="none" stroke="#a0a0a0" stroke-width="1.3"/><path d="M6.4 6.4L9 9" stroke="#a0a0a0" stroke-width="1.6"/></svg>
<div class="a" style="left:514px;top:520px;width:4px;height:25px;background:#353535;"></div>
<div class="a" style="left:517px;top:520px;width:1px;height:25px;background:#2a2a2a;"></div>
<svg class="a" style="left:525px;top:522px;" width="16" height="17" viewBox="0 0 16 17"><rect x="2" y="0.5" width="7" height="7" fill="#c4c4c4"/><circle cx="5" cy="12" r="4.6" fill="#c4c4c4"/><path d="M11 4.5L15.2 11.5H7.3z" fill="#c4c4c4"/></svg>
<div class="a" style="left:549px;top:520px;width:1px;height:25px;background:#2a2a2a;"></div>
<svg class="a" style="left:558px;top:525px;" width="13" height="13" viewBox="0 0 13 13"><path d="M7 0.5H12.5V6L5.5 13L0 7.5z" fill="#c4c4c4"/><circle cx="9.7" cy="3.3" r="1.1" fill="#3c3c3c"/></svg>
<div class="a" style="left:582px;top:520px;width:1px;height:25px;background:#2a2a2a;"></div>
<div class="a" style="left:583px;top:520px;width:49px;height:25px;background:#4a4a4a;"></div>
<svg class="a" style="left:590px;top:524px;" width="19" height="16" viewBox="0 0 19 16"><path d="M1 8c3-5 13-5 16 0c-3 5-13 5-16 0z" fill="none" stroke="#c4c4c4" stroke-width="1.2"/><path d="M3 15L15 1" stroke="#c4c4c4" stroke-width="1.4"/></svg>
<div class="t" style="left:610px;top:524px;color:#c4c4c4;letter-spacing:0.2px;">18</div>
<svg class="a" style="left:4px;top:554px;" width="11" height="10" viewBox="0 0 11 10"><path d="M0 0.5H10.5L5.25 9.5z" fill="#8c8c8c"/></svg>
<svg class="a" style="left:20px;top:553px;" width="17" height="13" viewBox="0 0 17 13"><path d="M1 1.2h5l1.5 1.8h6.5v2.2H4.5L1 11.8z" fill="none" stroke="#c4c4c4" stroke-width="1.3" stroke-linejoin="round"/><path d="M4 5.8h12.3L13.2 12H1z" fill="#c4c4c4"/></svg>
<div class="t" style="left:42px;top:550px;font-weight:bold;letter-spacing:0;">Assets</div>
<svg class="a" style="left:22px;top:574px;" width="11" height="10" viewBox="0 0 11 10"><path d="M0 0.5H10.5L5.25 9.5z" fill="#8c8c8c"/></svg>
<svg class="a" style="left:37px;top:573px;" width="17" height="13" viewBox="0 0 17 13"><path d="M1 1.2h5l1.5 1.8h6.5v2.2H4.5L1 11.8z" fill="none" stroke="#c4c4c4" stroke-width="1.3" stroke-linejoin="round"/><path d="M4 5.8h12.3L13.2 12H1z" fill="#c4c4c4"/></svg>
<div class="t" style="left:58px;top:570px;">Scenes</div>
<svg class="a" style="left:52px;top:589px;" width="19" height="18" viewBox="0 0 19 18"><g fill="none" stroke="#c4c4c4" stroke-width="1.7" stroke-linejoin="round"><path d="M2.6 9.3L9.2 4L15.6 2.2L16.8 9.2L15.6 16L9.2 14.6Z"/><path d="M2.6 9.3H11.6L14.8 3.2M11.6 9.3L14.8 15.2"/></g></svg>
<div class="t" style="left:75px;top:590px;">SampleScene</div>
<svg class="a" style="left:22px;top:614px;" width="11" height="10" viewBox="0 0 11 10"><path d="M0 0.5H10.5L5.25 9.5z" fill="#8c8c8c"/></svg>
<svg class="a" style="left:37px;top:613px;" width="17" height="13" viewBox="0 0 17 13"><path d="M1 1.2h5l1.5 1.8h6.5v2.2H4.5L1 11.8z" fill="none" stroke="#c4c4c4" stroke-width="1.3" stroke-linejoin="round"/><path d="M4 5.8h12.3L13.2 12H1z" fill="#c4c4c4"/></svg>
<div class="t" style="left:58px;top:610px;">SpriteSheets</div>
<svg class="a" style="left:39px;top:634px;" width="11" height="10" viewBox="0 0 11 10"><path d="M0 0.5H10.5L5.25 9.5z" fill="#8c8c8c"/></svg>
<div class="t" style="left:75px;top:630px;">BouncyBall</div>
<svg class="a" style="left:72px;top:651px;" width="17" height="17" viewBox="0 0 17 17"><rect x="2" y="2" width="13" height="13" fill="#2a2740"/><rect x="2" y="2" width="13" height="13" fill="none" stroke="#8a7cd0" stroke-width="1"/><g fill="#a598e0"><rect x="0.5" y="0.5" width="3" height="3"/><rect x="13.5" y="0.5" width="3" height="3"/><rect x="0.5" y="13.5" width="3" height="3"/><rect x="13.5" y="13.5" width="3" height="3"/></g><circle cx="8.5" cy="8.5" r="3.2" fill="#d8d8cc"/></svg>
<div class="t" style="left:93px;top:650px;">BouncyBall_0</div>
<svg class="a" style="left:72px;top:671px;" width="17" height="17" viewBox="0 0 17 17"><rect x="2" y="2" width="13" height="13" fill="#2a2740"/><rect x="2" y="2" width="13" height="13" fill="none" stroke="#8a7cd0" stroke-width="1"/><g fill="#a598e0"><rect x="0.5" y="0.5" width="3" height="3"/><rect x="13.5" y="0.5" width="3" height="3"/><rect x="0.5" y="13.5" width="3" height="3"/><rect x="13.5" y="13.5" width="3" height="3"/></g><circle cx="8.5" cy="8.5" r="3.2" fill="#d8d8cc"/></svg>
<div class="t" style="left:93px;top:670px;">BouncyBall_1</div>
<svg class="a" style="left:72px;top:691px;" width="17" height="17" viewBox="0 0 17 17"><rect x="2" y="2" width="13" height="13" fill="#2a2740"/><rect x="2" y="2" width="13" height="13" fill="none" stroke="#8a7cd0" stroke-width="1"/><g fill="#a598e0"><rect x="0.5" y="0.5" width="3" height="3"/><rect x="13.5" y="0.5" width="3" height="3"/><rect x="0.5" y="13.5" width="3" height="3"/><rect x="13.5" y="13.5" width="3" height="3"/></g><circle cx="8.5" cy="8.5" r="3.2" fill="#d8d8cc"/></svg>
<div class="t" style="left:93px;top:690px;">BouncyBall_2</div>
<svg class="a" style="left:72px;top:711px;" width="17" height="17" viewBox="0 0 17 17"><rect x="2" y="2" width="13" height="13" fill="#2a2740"/><rect x="2" y="2" width="13" height="13" fill="none" stroke="#8a7cd0" stroke-width="1"/><g fill="#a598e0"><rect x="0.5" y="0.5" width="3" height="3"/><rect x="13.5" y="0.5" width="3" height="3"/><rect x="0.5" y="13.5" width="3" height="3"/><rect x="13.5" y="13.5" width="3" height="3"/></g><circle cx="8.5" cy="8.5" r="3.2" fill="#d8d8cc"/></svg>
<div class="t" style="left:93px;top:710px;">BouncyBall_3</div>
<svg class="a" style="left:72px;top:731px;" width="17" height="17" viewBox="0 0 17 17"><rect x="2" y="2" width="13" height="13" fill="#2a2740"/><rect x="2" y="2" width="13" height="13" fill="none" stroke="#8a7cd0" stroke-width="1"/><g fill="#a598e0"><rect x="0.5" y="0.5" width="3" height="3"/><rect x="13.5" y="0.5" width="3" height="3"/><rect x="0.5" y="13.5" width="3" height="3"/><rect x="13.5" y="13.5" width="3" height="3"/></g><circle cx="8.5" cy="8.5" r="3.2" fill="#d8d8cc"/></svg>
<div class="t" style="left:93px;top:730px;">BouncyBall_4</div>
<svg class="a" style="left:72px;top:751px;" width="17" height="17" viewBox="0 0 17 17"><rect x="2" y="2" width="13" height="13" fill="#2a2740"/><rect x="2" y="2" width="13" height="13" fill="none" stroke="#8a7cd0" stroke-width="1"/><g fill="#a598e0"><rect x="0.5" y="0.5" width="3" height="3"/><rect x="13.5" y="0.5" width="3" height="3"/><rect x="0.5" y="13.5" width="3" height="3"/><rect x="13.5" y="13.5" width="3" height="3"/></g><circle cx="8.5" cy="8.5" r="3.2" fill="#d8d8cc"/></svg>
<div class="t" style="left:93px;top:750px;">BouncyBall_5</div>
<svg class="a" style="left:72px;top:771px;" width="17" height="17" viewBox="0 0 17 17"><rect x="2" y="2" width="13" height="13" fill="#2a2740"/><rect x="2" y="2" width="13" height="13" fill="none" stroke="#8a7cd0" stroke-width="1"/><g fill="#a598e0"><rect x="0.5" y="0.5" width="3" height="3"/><rect x="13.5" y="0.5" width="3" height="3"/><rect x="0.5" y="13.5" width="3" height="3"/><rect x="13.5" y="13.5" width="3" height="3"/></g><circle cx="8.5" cy="8.5" r="3.2" fill="#d8d8cc"/></svg>
<div class="t" style="left:93px;top:770px;">BouncyBall_6</div>
<svg class="a" style="left:72px;top:791px;" width="17" height="17" viewBox="0 0 17 17"><rect x="2" y="2" width="13" height="13" fill="#2a2740"/><rect x="2" y="2" width="13" height="13" fill="none" stroke="#8a7cd0" stroke-width="1"/><g fill="#a598e0"><rect x="0.5" y="0.5" width="3" height="3"/><rect x="13.5" y="0.5" width="3" height="3"/><rect x="0.5" y="13.5" width="3" height="3"/><rect x="13.5" y="13.5" width="3" height="3"/></g><circle cx="8.5" cy="8.5" r="3.2" fill="#d8d8cc"/></svg>
<div class="t" style="left:93px;top:790px;">BouncyBall_7</div>
<svg class="a" style="left:72px;top:811px;" width="17" height="17" viewBox="0 0 17 17"><rect x="2" y="2" width="13" height="13" fill="#2a2740"/><rect x="2" y="2" width="13" height="13" fill="none" stroke="#8a7cd0" stroke-width="1"/><g fill="#a598e0"><rect x="0.5" y="0.5" width="3" height="3"/><rect x="13.5" y="0.5" width="3" height="3"/><rect x="0.5" y="13.5" width="3" height="3"/><rect x="13.5" y="13.5" width="3" height="3"/></g><circle cx="8.5" cy="8.5" r="3.2" fill="#d8d8cc"/></svg>
<div class="t" style="left:93px;top:810px;">BouncyBall_8</div>
<svg class="a" style="left:72px;top:831px;" width="17" height="17" viewBox="0 0 17 17"><rect x="2" y="2" width="13" height="13" fill="#2a2740"/><rect x="2" y="2" width="13" height="13" fill="none" stroke="#8a7cd0" stroke-width="1"/><g fill="#a598e0"><rect x="0.5" y="0.5" width="3" height="3"/><rect x="13.5" y="0.5" width="3" height="3"/><rect x="0.5" y="13.5" width="3" height="3"/><rect x="13.5" y="13.5" width="3" height="3"/></g><circle cx="8.5" cy="8.5" r="3.2" fill="#d8d8cc"/></svg>
<div class="t" style="left:93px;top:830px;">BouncyBall_9</div>
<svg class="a" style="left:72px;top:851px;" width="17" height="17" viewBox="0 0 17 17"><rect x="2" y="2" width="13" height="13" fill="#2a2740"/><rect x="2" y="2" width="13" height="13" fill="none" stroke="#8a7cd0" stroke-width="1"/><g fill="#a598e0"><rect x="0.5" y="0.5" width="3" height="3"/><rect x="13.5" y="0.5" width="3" height="3"/><rect x="0.5" y="13.5" width="3" height="3"/><rect x="13.5" y="13.5" width="3" height="3"/></g><circle cx="8.5" cy="8.5" r="3.2" fill="#d8d8cc"/></svg>
<div class="t" style="left:93px;top:850px;">BouncyBall_10</div>
<svg class="a" style="left:72px;top:871px;" width="17" height="17" viewBox="0 0 17 17"><rect x="2" y="2" width="13" height="13" fill="#2a2740"/><rect x="2" y="2" width="13" height="13" fill="none" stroke="#8a7cd0" stroke-width="1"/><g fill="#a598e0"><rect x="0.5" y="0.5" width="3" height="3"/><rect x="13.5" y="0.5" width="3" height="3"/><rect x="0.5" y="13.5" width="3" height="3"/><rect x="13.5" y="13.5" width="3" height="3"/></g><circle cx="8.5" cy="8.5" r="3.2" fill="#d8d8cc"/></svg>
<div class="t" style="left:93px;top:870px;">BouncyBall_11</div>
<svg class="a" style="left:72px;top:891px;" width="17" height="17" viewBox="0 0 17 17"><rect x="2" y="2" width="13" height="13" fill="#2a2740"/><rect x="2" y="2" width="13" height="13" fill="none" stroke="#8a7cd0" stroke-width="1"/><g fill="#a598e0"><rect x="0.5" y="0.5" width="3" height="3"/><rect x="13.5" y="0.5" width="3" height="3"/><rect x="0.5" y="13.5" width="3" height="3"/><rect x="13.5" y="13.5" width="3" height="3"/></g><circle cx="8.5" cy="8.5" r="3.2" fill="#d8d8cc"/></svg>
<div class="t" style="left:93px;top:890px;">BouncyBall_12</div>
<svg class="a" style="left:72px;top:911px;" width="17" height="17" viewBox="0 0 17 17"><rect x="2" y="2" width="13" height="13" fill="#2a2740"/><rect x="2" y="2" width="13" height="13" fill="none" stroke="#8a7cd0" stroke-width="1"/><g fill="#a598e0"><rect x="0.5" y="0.5" width="3" height="3"/><rect x="13.5" y="0.5" width="3" height="3"/><rect x="0.5" y="13.5" width="3" height="3"/><rect x="13.5" y="13.5" width="3" height="3"/></g><circle cx="8.5" cy="8.5" r="3.2" fill="#d8d8cc"/></svg>
<div class="t" style="left:93px;top:910px;">BouncyBall_13</div>
<div class="a" style="left:617px;top:548px;width:15px;height:366px;background:#333333;border-left:1px solid #2c2c2c"></div>
<svg class="a" style="left:619px;top:552px;" width="12" height="8" viewBox="0 0 12 8"><path d="M1 7H11L6 1z" fill="#c4c4c4"/></svg>
<div class="a" style="left:619px;top:566px;width:12px;height:104px;background:#5f5f5f;border-radius:6px"></div>
<svg class="a" style="left:619px;top:898px;" width="12" height="8" viewBox="0 0 12 8"><path d="M1 1H11L6 7z" fill="#c4c4c4"/></svg>
<div class="a" style="left:634px;top:496px;width:2px;height:418px;background:#191919;"></div>
<div class="a" style="left:636px;top:496px;width:843px;height:418px;background:#383838;"></div>
<div class="a" style="left:986px;top:545px;width:493px;height:347px;overflow:hidden;background:#2a2a2a"><div class="a" style="left:-0.20px;top:0;width:1px;height:347px;background:#1a1a1a"></div><div class="a" style="left:12.30px;top:0;width:1px;height:347px;background:#252525"></div><div class="a" style="left:24.80px;top:0;width:1px;height:347px;background:#252525"></div><div class="a" style="left:37.30px;top:0;width:1px;height:347px;background:#252525"></div><div class="a" style="left:49.80px;top:0;width:1px;height:347px;background:#252525"></div><div class="a" style="left:62.30px;top:0;width:1px;height:347px;background:#252525"></div><div class="a" style="left:74.80px;top:0;width:1px;height:347px;background:#252525"></div><div class="a" style="left:87.30px;top:0;width:1px;height:347px;background:#252525"></div><div class="a" style="left:99.80px;top:0;width:1px;height:347px;background:#252525"></div><div class="a" style="left:112.30px;top:0;width:1px;height:347px;background:#252525"></div><div class="a" style="left:124.80px;top:0;width:1px;height:347px;background:#1a1a1a"></div><div class="a" style="left:137.30px;top:0;width:1px;height:347px;background:#252525"></div><div class="a" style="left:149.80px;top:0;width:1px;height:347px;background:#252525"></div><div class="a" style="left:162.30px;top:0;width:1px;height:347px;background:#252525"></div><div class="a" style="left:174.80px;top:0;width:1px;height:347px;background:#252525"></div><div class="a" style="left:187.30px;top:0;width:1px;height:347px;background:#252525"></div><div class="a" style="left:199.80px;top:0;width:1px;height:347px;background:#252525"></div><div class="a" style="left:212.30px;top:0;width:1px;height:347px;background:#252525"></div><div class="a" style="left:224.80px;top:0;width:1px;height:347px;background:#252525"></div><div class="a" style="left:237.30px;top:0;width:1px;height:347px;background:#252525"></div><div class="a" style="left:249.80px;top:0;width:1px;height:347px;background:#1a1a1a"></div><div class="a" style="left:262.30px;top:0;width:1px;height:347px;background:#252525"></div><div class="a" style="left:274.80px;top:0;width:1px;height:347px;background:#252525"></div><div class="a" style="left:287.30px;top:0;width:1px;height:347px;background:#252525"></div><div class="a" style="left:299.80px;top:0;width:1px;height:347px;background:#252525"></div><div class="a" style="left:312.30px;top:0;width:1px;height:347px;background:#252525"></div><div class="a" style="left:324.80px;top:0;width:1px;height:347px;background:#252525"></div><div class="a" style="left:337.30px;top:0;width:1px;height:347px;background:#252525"></div><div class="a" style="left:349.80px;top:0;width:1px;height:347px;background:#252525"></div><div class="a" style="left:362.30px;top:0;width:1px;height:347px;background:#252525"></div><div class="a" style="left:374.80px;top:0;width:1px;height:347px;background:#1a1a1a"></div><div class="a" style="left:387.30px;top:0;width:1px;height:347px;background:#252525"></div><div class="a" style="left:399.80px;top:0;width:1px;height:347px;background:#252525"></div><div class="a" style="left:412.30px;top:0;width:1px;height:347px;background:#252525"></div><div class="a" style="left:424.80px;top:0;width:1px;height:347px;background:#252525"></div><div class="a" style="left:437.30px;top:0;width:1px;height:347px;background:#252525"></div><div class="a" style="left:449.80px;top:0;width:1px;height:347px;background:#252525"></div><div class="a" style="left:462.30px;top:0;width:1px;height:347px;background:#252525"></div><div class="a" style="left:474.80px;top:0;width:1px;height:347px;background:#252525"></div><div class="a" style="left:487.30px;top:0;width:1px;height:347px;background:#252525"></div><div class="a" style="left:0;top:-0.10px;width:493px;height:1px;background:#1a1a1a"></div><div class="a" style="left:0;top:12.40px;width:493px;height:1px;background:#252525"></div><div class="a" style="left:0;top:24.90px;width:493px;height:1px;background:#252525"></div><div class="a" style="left:0;top:37.40px;width:493px;height:1px;background:#252525"></div><div class="a" style="left:0;top:49.90px;width:493px;height:1px;background:#252525"></div><div class="a" style="left:0;top:62.40px;width:493px;height:1px;background:#252525"></div><div class="a" style="left:0;top:74.90px;width:493px;height:1px;background:#252525"></div><div class="a" style="left:0;top:87.40px;width:493px;height:1px;background:#252525"></div><div class="a" style="left:0;top:99.90px;width:493px;height:1px;background:#252525"></div><div class="a" style="left:0;top:112.40px;width:493px;height:1px;background:#252525"></div><div class="a" style="left:0;top:124.90px;width:493px;height:1px;background:#1a1a1a"></div><div class="a" style="left:0;top:137.40px;width:493px;height:1px;background:#252525"></div><div class="a" style="left:0;top:149.90px;width:493px;height:1px;background:#252525"></div><div class="a" style="left:0;top:162.40px;width:493px;height:1px;background:#252525"></div><div class="a" style="left:0;top:174.90px;width:493px;height:1px;background:#252525"></div><div class="a" style="left:0;top:187.40px;width:493px;height:1px;background:#252525"></div><div class="a" style="left:0;top:199.90px;width:493px;height:1px;background:#252525"></div><div class="a" style="left:0;top:212.40px;width:493px;height:1px;background:#252525"></div><div class="a" style="left:0;top:224.90px;width:493px;height:1px;background:#252525"></div><div class="a" style="left:0;top:237.40px;width:493px;height:1px;background:#252525"></div><div class="a" style="left:0;top:249.90px;width:493px;height:1px;background:#1a1a1a"></div><div class="a" style="left:0;top:262.40px;width:493px;height:1px;background:#252525"></div><div class="a" style="left:0;top:274.90px;width:493px;height:1px;background:#252525"></div><div class="a" style="left:0;top:287.40px;width:493px;height:1px;background:#252525"></div><div class="a" style="left:0;top:299.90px;width:493px;height:1px;background:#252525"></div><div class="a" style="left:0;top:312.40px;width:493px;height:1px;background:#252525"></div><div class="a" style="left:0;top:324.90px;width:493px;height:1px;background:#252525"></div><div class="a" style="left:0;top:337.40px;width:493px;height:1px;background:#252525"></div></div>
<div class="a" style="left:986px;top:545px;width:493px;height:8px;background:linear-gradient(rgba(20,20,20,.6),rgba(20,20,20,0))"></div>
<div class="a" style="left:986px;top:892px;width:493px;height:22px;background:#3f3f3f;"></div>
<div class="a" style="left:986px;top:520px;width:493px;height:25px;background:#3c3c3c;"></div>
<div class="a" style="left:986px;top:520px;width:17px;height:25px;background:#393939;"></div>
<svg class="a" style="left:1001px;top:520px;" width="24" height="25" viewBox="0 0 24 25"><path d="M0 0H1L14 12.5L1 25H0z" fill="#393939"/><path d="M1 0L14 12.5L1 25" fill="none" stroke="#2a2a2a" stroke-width="1.5"/></svg>
<div class="a" style="left:636px;top:496px;width:843px;height:24px;background:#252525;"></div>
<div class="a" style="left:636px;top:496px;width:114px;height:24px;background:#3c3c3c;border-radius:0 3px 0 0"></div>
<svg class="a" style="left:647px;top:502px;" width="16" height="15" viewBox="0 0 16 15"><path d="M2 2.5L7 7.5L2 12.5M7 7.5H14M11 4.5L14.2 7.5L11 10.5" fill="none" stroke="#c4c4c4" stroke-width="1.8"/><circle cx="2" cy="2.5" r="1.6" fill="#c4c4c4"/><circle cx="2" cy="12.5" r="1.6" fill="#c4c4c4"/></svg>
<div class="t" style="left:665px;top:500px;">Animator</div>
<svg class="a" style="left:761px;top:502px;" width="15" height="15" viewBox="0 0 15 15"><circle cx="7.5" cy="7.5" r="7" fill="#c4c4c4"/><path d="M7.5 3V8H11" fill="none" stroke="#282828" stroke-width="1.6"/></svg>
<div class="t" style="left:781px;top:500px;">Animation</div>
<svg class="a" style="left:1437px;top:501px;" width="13" height="13" viewBox="0 0 13 13"><path d="M1.5 12.4h10v-5.4h-10z" fill="none" stroke="#c4c4c4" stroke-width="1.2"/><path d="M3.6 7V3.6a2.9 2.6 0 0 1 5.8 0V4.4" fill="none" stroke="#c4c4c4" stroke-width="1.2"/></svg>
<svg class="a" style="left:1461px;top:501px;" width="4" height="13" viewBox="0 0 4 13"><circle cx="2" cy="2" r="1.5" fill="#c4c4c4"/><circle cx="2" cy="6.5" r="1.5" fill="#c4c4c4"/><circle cx="2" cy="11" r="1.5" fill="#c4c4c4"/></svg>
<div class="a" style="left:636px;top:520px;width:350px;height:25px;background:#3c3c3c;border-bottom:1px solid #242424"></div>
<div class="a" style="left:641px;top:520px;width:63px;height:25px;background:#3a3a3a;border-left:1px solid #2a2a2a"></div>
<div class="t" style="left:646px;top:524px;">Layers</div>
<div class="a" style="left:704px;top:520px;width:94px;height:25px;background:#4b4b4b;border-left:1px solid #2e2e2e;border-right:1px solid #2e2e2e"></div>
<div class="t" style="left:710px;top:524px;">Parameters</div>
<svg class="a" style="left:961px;top:527px;" width="20" height="12" viewBox="0 0 20 12"><path d="M1 6c4-6.5 14-6.5 18 0c-4 6.5-14 6.5-18 0z" fill="none" stroke="#c4c4c4" stroke-width="1.5"/><circle cx="10" cy="5" r="3.4" fill="#c4c4c4"/></svg>
<div class="a" style="left:636px;top:545px;width:350px;height:26px;background:#3c3c3c;border-bottom:1px solid #2c2c2c"></div>
<div class="a" style="left:648px;top:549px;width:279px;height:19px;background:#2a2a2a;border:1px solid #212121;border-radius:4px"></div>
<svg class="a" style="left:655px;top:553px;" width="12" height="11" viewBox="0 0 12 11"><circle cx="4.2" cy="4.2" r="3" fill="none" stroke="#8a8a8a" stroke-width="1.3"/><path d="M6.4 6.4L9 9" stroke="#8a8a8a" stroke-width="1.6"/><path d="M8.5 3.6h3.2l-1.6 1.8z" fill="#8a8a8a"/></svg>
<div class="t" style="left:671px;top:550px;color:#7a7a7a;">Name</div>
<svg class="a" style="left:949px;top:551px;" width="16" height="16" viewBox="0 0 16 16"><path d="M8 1V15M1 8H15" stroke="#b0b0b0" stroke-width="1.5"/></svg>
<svg class="a" style="left:970px;top:557px;" width="8" height="5" viewBox="0 0 8 5"><path d="M0 0H8L4.0 5z" fill="#a0a0a0"/></svg>
<div class="a" style="left:985px;top:520px;width:1px;height:394px;background:#232323;"></div>
<div class="a" style="left:0px;top:914px;width:1917px;height:3px;background:#191919;"></div>
</body></html>
